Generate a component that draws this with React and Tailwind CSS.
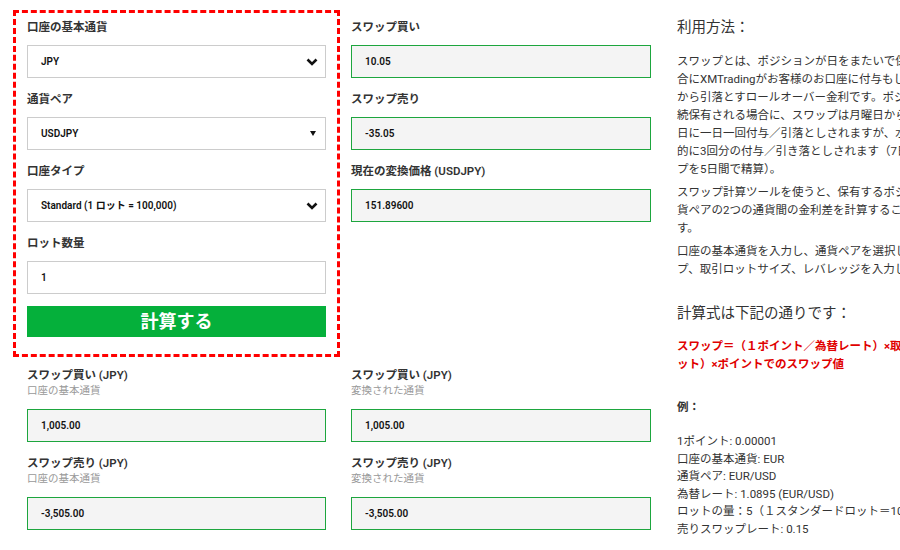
import React from "react";

const font = { fontFamily: "Roboto, 'Noto Sans CJK JP', sans-serif" };

const Chevron = () => (
  <svg width="12" height="8" viewBox="0 0 12 8" className="shrink-0">
    <polyline points="1.5,1.5 6,6 10.5,1.5" fill="none" stroke="#111" strokeWidth="2.6" />
  </svg>
);

const Triangle = () => (
  <span className="mr-[2px] h-0 w-0 border-x-[3.5px] border-t-[5px] border-x-transparent border-t-[#111]" />
);

const Field = ({ label, first, children }) => (
  <div className={first ? "" : "mt-[12px]"}>
    <div className="mb-[9px] h-[18px] text-[11.5px] font-semibold leading-[18px] text-[#333]">{label}</div>
    {children}
  </div>
);

const SelectBox = ({ value, icon }) => (
  <div className="flex h-[33px] items-center justify-between border border-[#ccc] bg-white pl-[13px] pr-[7px] text-[10px] font-semibold text-[#111]">
    <span>{value}</span>
    {icon}
  </div>
);

const ValueBox = ({ value }) => (
  <div className="flex h-[33px] items-center border border-[#1da63e] bg-[#f4f4f4] pl-[13px] text-[10px] font-semibold text-[#111]">
    {value}
  </div>
);

const Result = ({ title, sub, value, first }) => (
  <div className={first ? "" : "mt-[13px]"}>
    <div className="h-[16px] text-[11.5px] font-semibold leading-[16px] text-[#333]">{title}</div>
    <div className="mb-[10px] h-[16px] text-[10.5px] leading-[16px] text-[#999]">{sub}</div>
    <ValueBox value={value} />
  </div>
);

const Lines = ({ lines, className }) => (
  <div className={className}>
    {lines.map((l, i) => (
      <div key={i} className="whitespace-nowrap">{l}</div>
    ))}
  </div>
);

export default function App() {
  return (
    <div style={font} className="flex h-[550px] w-[900px] overflow-hidden bg-white">
      <div className="w-[664px] shrink-0">
        <div className="flex pt-[10px]">
          <div className="ml-[13px] w-[327px] border-[3px] border-dashed border-[#ff0000] px-[11px] pb-[17px] pt-[5px]">
            <Field label="口座の基本通貨" first>
              <SelectBox value="JPY" icon={<Chevron />} />
            </Field>
            <Field label="通貨ペア">
              <SelectBox value="USDJPY" icon={<Triangle />} />
            </Field>
            <Field label="口座タイプ">
              <SelectBox value="Standard (1 ロット = 100,000)" icon={<Chevron />} />
            </Field>
            <Field label="ロット数量">
              <div className="flex h-[33px] items-center border border-[#ccc] bg-white pl-[13px] text-[10px] font-semibold text-[#111]">1</div>
            </Field>
            <button className="mt-[12px] flex h-[31px] w-full items-center justify-center bg-[#05b03b] text-[18px] font-bold text-white">
              計算する
            </button>
          </div>
          <div className="ml-[11px] w-[300px] pt-[8px]">
            <Field label="スワップ買い" first>
              <ValueBox value="10.05" />
            </Field>
            <Field label="スワップ売り">
              <ValueBox value="-35.05" />
            </Field>
            <Field label="現在の変換価格 (USDJPY)">
              <ValueBox value="151.89600" />
            </Field>
          </div>
        </div>
        <div className="mt-[10px] grid grid-cols-[299px_300px] gap-x-[25px] pl-[27px]">
          <div>
            <Result first title="スワップ買い (JPY)" sub="口座の基本通貨" value="1,005.00" />
            <Result title="スワップ売り (JPY)" sub="口座の基本通貨" value="-3,505.00" />
          </div>
          <div>
            <Result first title="スワップ買い (JPY)" sub="変換された通貨" value="1,005.00" />
            <Result title="スワップ売り (JPY)" sub="変換された通貨" value="-3,505.00" />
          </div>
        </div>
      </div>
      <div className="ml-[13px] pt-[18px] text-[11.5px] leading-[18px] text-[#333]">
        <h2 className="mb-[14px] text-[14.5px] leading-[20px]">利用方法：</h2>
        <Lines
          className="mb-[5px]"
          lines={[
            "スワップとは、ポジションが日をまたいで保有された場",
            "合にXMTradingがお客様のお口座に付与もしくはお口座",
            "から引落とすロールオーバー金利です。ポジションが継",
            "続保有される場合に、スワップは月曜日から金曜",
            "日に一日一回付与／引落としされますが、水曜日は例外",
            "的に3回分の付与／引き落としされます（7日間のスワッ",
            "プを5日間で精算）。",
          ]}
        />
        <Lines
          className="mb-[5px]"
          lines={[
            "スワップ計算ツールを使うと、保有するポジションの通",
            "貨ペアの2つの通貨間の金利差を計算することができま",
            "す。",
          ]}
        />
        <Lines
          lines={[
            "口座の基本通貨を入力し、通貨ペアを選択し、口座タイ",
            "プ、取引ロットサイズ、レバレッジを入力してください。",
          ]}
        />
        <h2 className="mt-[26px] text-[14.5px] leading-[20px]">計算式は下記の通りです：</h2>
        <Lines
          className="mt-[13px] font-bold text-[#e00000]"
          lines={["スワップ＝（１ポイント／為替レート）×取引量（ロ", "ット）×ポイントでのスワップ値"]}
        />
        <div className="mt-[25px] font-bold">例：</div>
        <Lines
          className="mt-[17px] leading-[17.5px]"
          lines={[
            "1ポイント: 0.00001",
            "口座の基本通貨: EUR",
            "通貨ペア: EUR/USD",
            "為替レート: 1.0895 (EUR/USD)",
            "ロットの量：5（１スタンダードロット＝100,000）",
            "売りスワップレート: 0.15",
          ]}
        />
      </div>
    </div>
  );
}
